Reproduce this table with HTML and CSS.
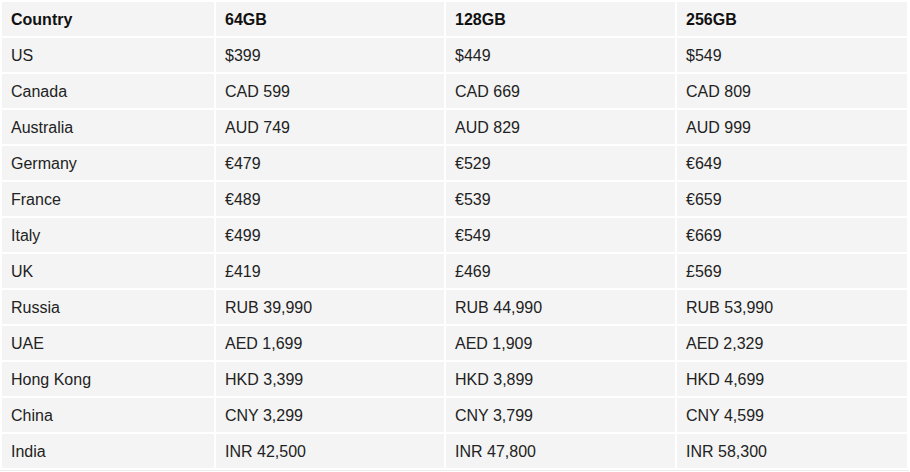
FILE: index.html
```html
<!DOCTYPE html>
<html>
<head>
<meta charset="utf-8">
<link rel="stylesheet" href="styles.css">
</head>
<body>
<table class="prices">
  <colgroup>
    <col class="c1"><col class="c2"><col class="c3"><col class="c4">
  </colgroup>
  <thead>
    <tr><th>Country</th><th>64GB</th><th>128GB</th><th>256GB</th></tr>
  </thead>
  <tbody>
    <tr><td>US</td><td>$399</td><td>$449</td><td>$549</td></tr>
    <tr><td>Canada</td><td>CAD 599</td><td>CAD 669</td><td>CAD 809</td></tr>
    <tr><td>Australia</td><td>AUD 749</td><td>AUD 829</td><td>AUD 999</td></tr>
    <tr><td>Germany</td><td>€479</td><td>€529</td><td>€649</td></tr>
    <tr><td>France</td><td>€489</td><td>€539</td><td>€659</td></tr>
    <tr><td>Italy</td><td>€499</td><td>€549</td><td>€669</td></tr>
    <tr><td>UK</td><td>£419</td><td>£469</td><td>£569</td></tr>
    <tr><td>Russia</td><td>RUB 39,990</td><td>RUB 44,990</td><td>RUB 53,990</td></tr>
    <tr><td>UAE</td><td>AED 1,699</td><td>AED 1,909</td><td>AED 2,329</td></tr>
    <tr><td>Hong Kong</td><td>HKD 3,399</td><td>HKD 3,899</td><td>HKD 4,699</td></tr>
    <tr><td>China</td><td>CNY 3,299</td><td>CNY 3,799</td><td>CNY 4,599</td></tr>
    <tr><td>India</td><td>INR 42,500</td><td>INR 47,800</td><td>INR 58,300</td></tr>
  </tbody>
</table>
</body>
</html>
```
FILE: styles.css
```css
html, body {
  margin: 0;
  padding: 0;
  background: #ffffff;
}
body {
  font-family: "Liberation Sans", Arial, sans-serif;
  font-size: 16px;
  color: #222222;
}
.prices {
  border-collapse: separate;
  border-spacing: 2px;
  table-layout: fixed;
  width: 908px;
  border-bottom: 1px solid #ececec;
}
.c1 { width: 212px; }
.c2 { width: 228px; }
.c3 { width: 229px; }
.c4 { width: 230px; }
.prices th,
.prices td {
  background: #f4f4f4;
  height: 34px;
  padding: 2px 9px 0;
  text-align: left;
  vertical-align: middle;
  box-sizing: border-box;
  line-height: 18px;
}
.prices th {
  font-weight: bold;
  color: #111111;
}
```
